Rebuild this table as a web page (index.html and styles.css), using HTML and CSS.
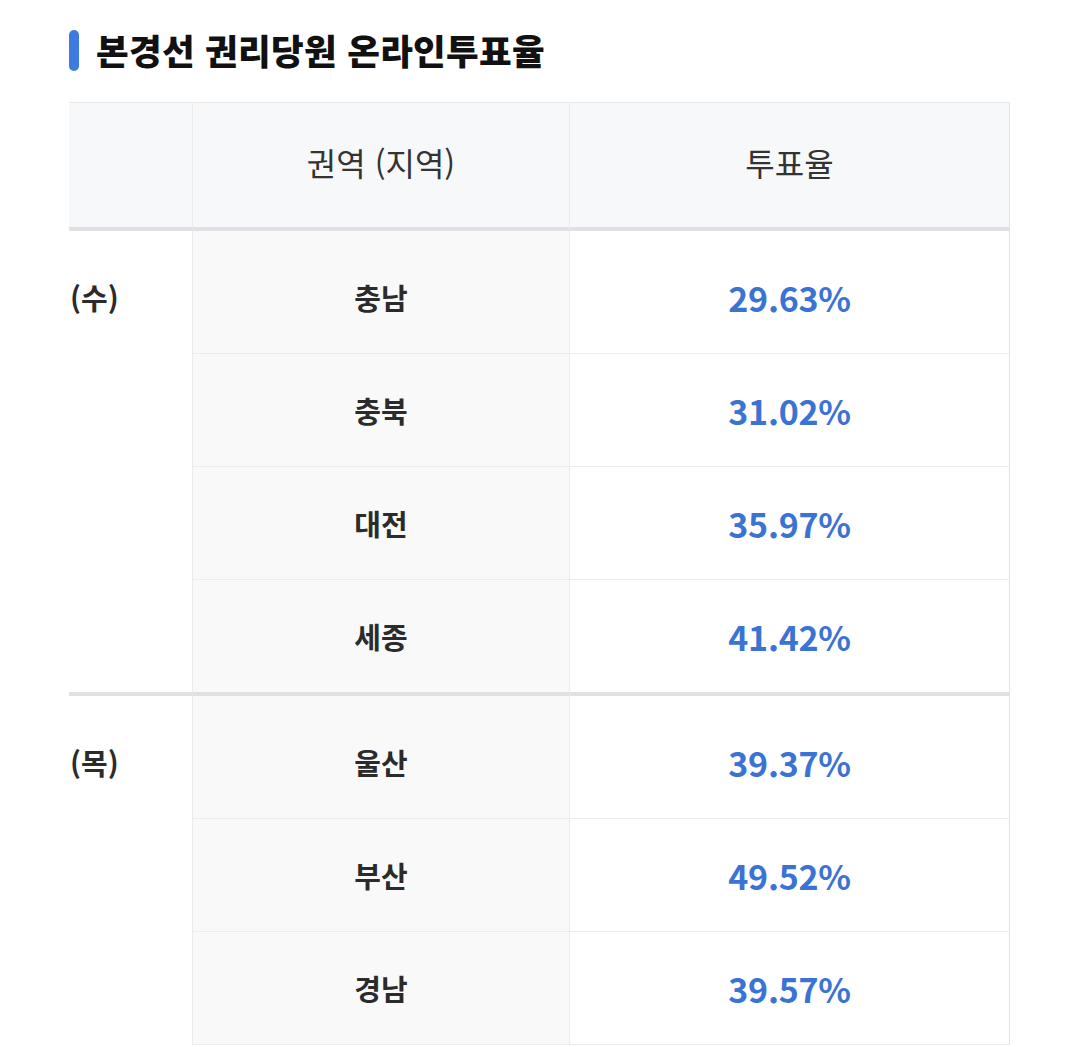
FILE: index.html
```html
<!DOCTYPE html>
<html lang="ko">
<head>
<meta charset="utf-8">
<link rel="stylesheet" href="styles.css">
</head>
<body>
<div class="title">
  <span class="bar"></span>
  <h2>본경선 권리당원 온라인투표율</h2>
</div>
<div class="wrap">
  <table class="vote">
    <thead>
      <tr>
        <th class="c1"><div class="cell"></div></th>
        <th class="c2"><div class="cell">권역 (지역)</div></th>
        <th class="c3"><div class="cell">투표율</div></th>
      </tr>
    </thead>
    <tbody>
      <tr class="first">
        <td class="c1 grp end" rowspan="4"><div class="cell">(수)</div></td>
        <td class="c2"><div class="cell">충남</div></td>
        <td class="c3"><div class="cell">29.63%</div></td>
      </tr>
      <tr>
        <td class="c2"><div class="cell">충북</div></td>
        <td class="c3"><div class="cell">31.02%</div></td>
      </tr>
      <tr>
        <td class="c2"><div class="cell">대전</div></td>
        <td class="c3"><div class="cell">35.97%</div></td>
      </tr>
      <tr class="last">
        <td class="c2"><div class="cell">세종</div></td>
        <td class="c3"><div class="cell">41.42%</div></td>
      </tr>
      <tr class="first">
        <td class="c1 grp" rowspan="3"><div class="cell">(목)</div></td>
        <td class="c2"><div class="cell">울산</div></td>
        <td class="c3"><div class="cell">39.37%</div></td>
      </tr>
      <tr>
        <td class="c2"><div class="cell">부산</div></td>
        <td class="c3"><div class="cell">49.52%</div></td>
      </tr>
      <tr>
        <td class="c2"><div class="cell">경남</div></td>
        <td class="c3"><div class="cell">39.57%</div></td>
      </tr>
    </tbody>
  </table>
</div>
</body>
</html>
```

FILE: styles.css
```css
html, body {
  margin: 0;
  padding: 0;
  background: #ffffff;
}
body {
  font-family: "Noto Sans CJK KR", "Noto Sans", sans-serif;
  color: #333333;
}
.title {
  display: flex;
  align-items: center;
  gap: 17px;
  height: 40px;
  margin: 30px 0 32px 69px;
}
.bar {
  width: 10px;
  height: 41px;
  border-radius: 5px;
  background: #3d7be0;
  flex: none;
}
.title h2 {
  margin: 0;
  font-size: 35.5px;
  font-weight: 900;
  color: #111111;
  line-height: 40px;
  letter-spacing: 0.3px;
}
.wrap {
  margin-left: 69px;
  width: 941px;
  overflow: hidden;
}
.vote {
  border-collapse: separate;
  border-spacing: 0;
  table-layout: fixed;
  width: 941px;
}
.vote th, .vote td {
  padding: 0;
  vertical-align: top;
}
.c1 { width: 123px; border-right: 1px solid #ebebeb; }
.c2 { width: 376px; border-right: 1px solid #ebebeb; }
.c3 { width: 439px; border-right: 1px solid #e2e2e2; }
.cell {
  display: flex;
  align-items: center;
  justify-content: center;
  height: 112px;
  box-sizing: border-box;
}
thead th {
  background: #f7f8fa;
  border-top: 1px solid #e6e7e9;
  border-bottom: 4px solid #dfe1e5;
  font-weight: 400;
  font-size: 32px;
  color: #333333;
}
thead .cell {
  height: 124px;
  padding-bottom: 6px;
}
tbody td.c2 {
  background: #f9f9f9;
  font-size: 29px;
  font-weight: 700;
  color: #2b2b2b;
}
tbody td.c3 {
  font-size: 34px;
  font-weight: 700;
  color: #3b73d5;
  letter-spacing: -0.3px;
}
tbody td.c2, tbody td.c3 {
  border-bottom: 1px solid #ececec;
}
tbody tr.first .cell {
  height: 122px;
  padding-top: 10px;
}
tbody tr.last td {
  border-bottom: 4px solid #dfe1e5;
}
td.grp {
  background: #ffffff;
  font-size: 29px;
  font-weight: 700;
  color: #2b2b2b;
}
td.grp .cell {
  justify-content: flex-start;
  height: 122px;
  padding-top: 10px;
  padding-left: 1px;
}
td.grp.end {
  border-bottom: 4px solid #dfe1e5;
}
```
